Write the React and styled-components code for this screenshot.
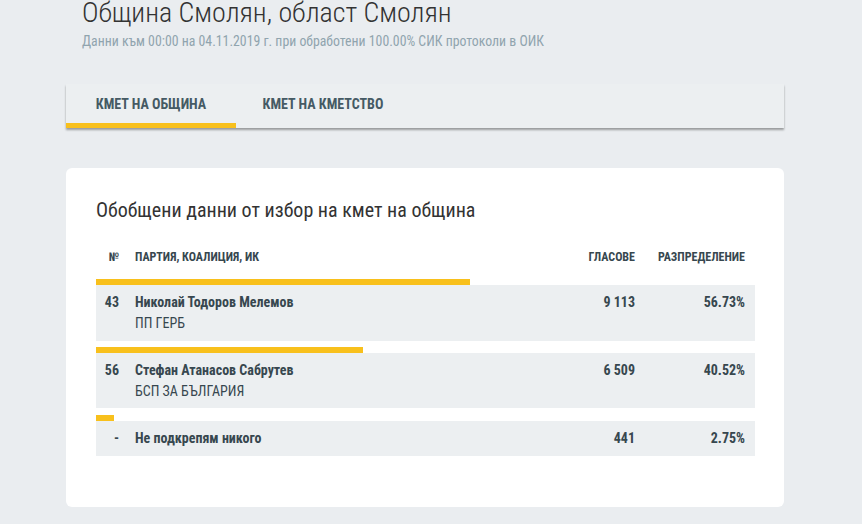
import React from "react";
import styled, { createGlobalStyle } from "styled-components";

const GlobalStyle = createGlobalStyle`
  body {
    margin: 0;
    background: #eaedf0;
    font-family: "Roboto Condensed", "Liberation Sans Narrow", Roboto, sans-serif;
    color: #37474f;
  }
`;

const Page = styled.div`
  width: 718px;
  padding-left: 66px;
`;

const Header = styled.header`
  padding-left: 16px;
`;

const Title = styled.h1`
  margin: 0;
  font-size: 28px;
  line-height: 26px;
  font-weight: 300;
  color: #333;
`;

const Subtitle = styled.div`
  font-size: 13.8px;
  line-height: 20px;
  color: #90a4ae;
  margin-top: 5px;
`;

const Tabs = styled.nav`
  display: flex;
  height: 44px;
  margin-top: 33px;
  background: #eceff1;
  box-shadow: 0 2px 2px rgba(0, 0, 0, 0.35);
`;

const Tab = styled.div`
  width: 170px;
  display: flex;
  align-items: center;
  justify-content: center;
  font-size: 14px;
  font-weight: 700;
  text-transform: uppercase;
  color: #455a64;
  box-sizing: border-box;
  border-bottom: 5px solid ${(p) => (p.active ? "#f8c01c" : "transparent")};
  padding-left: ${(p) => (p.active ? 0 : 4)}px;
`;

const Card = styled.section`
  margin-top: 40px;
  height: 339px;
  box-sizing: border-box;
  background: #fff;
  border-radius: 6px;
  padding: 30px 29px 0 30px;
`;

const CardTitle = styled.h2`
  margin: 0;
  font-size: 20px;
  line-height: 24px;
  font-weight: 400;
  color: #333;
`;

const HeadRow = styled.div`
  display: grid;
  grid-template-columns: 39px 1fr 100px 110px;
  align-items: center;
  height: 32px;
  margin-top: 19px;
  padding-right: 10px;
  font-size: 12px;
  font-weight: 700;
  text-transform: uppercase;
  color: #37474f;
`;

const Entry = styled.div`
  margin-top: ${(p) => p.gap}px;
`;

const Bar = styled.div`
  height: 6px;
  background: #f8c01c;
`;

const Row = styled.div`
  display: grid;
  grid-template-columns: 39px 1fr 100px 110px;
  align-items: start;
  min-height: ${(p) => p.h}px;
  box-sizing: border-box;
  padding: 8px 10px 0 0;
  background: #eceff1;
  font-size: 14px;
  line-height: 19px;
`;

const Num = styled.div`
  text-align: right;
  padding-right: 16px;
  font-weight: 700;
`;

const Right = styled.div`
  text-align: right;
  font-weight: 700;
`;

const Name = styled.div`
  font-weight: 700;
`;

const Party = styled.div`
  margin-top: 2px;
  font-weight: 400;
`;

const results = [
  { n: "43", name: "Николай Тодоров Мелемов", party: "ПП ГЕРБ", votes: "9 113", pct: 56.73, h: 56, gap: 6 },
  { n: "56", name: "Стефан Атанасов Сабрутев", party: "БСП ЗА БЪЛГАРИЯ", votes: "6 509", pct: 40.52, h: 55, gap: 6 },
  { n: "-", name: "Не подкрепям никого", votes: "441", pct: 2.75, h: 35, gap: 7 },
];

export default function App() {
  return (
    <>
      <GlobalStyle />
      <Page>
        <Header>
          <Title>Община Смолян, област Смолян</Title>
          <Subtitle>Данни към 00:00 на 04.11.2019 г. при обработени 100.00% СИК протоколи в ОИК</Subtitle>
        </Header>
        <Tabs>
          <Tab active>Кмет на община</Tab>
          <Tab>Кмет на кметство</Tab>
        </Tabs>
        <Card>
          <CardTitle>Обобщени данни от избор на кмет на община</CardTitle>
          <HeadRow>
            <Num>№</Num>
            <div>Партия, коалиция, ИК</div>
            <Right>Гласове</Right>
            <Right>Разпределение</Right>
          </HeadRow>
          {results.map((r) => (
            <Entry key={r.n} gap={r.gap}>
              <Bar style={{ width: `${r.pct}%` }} />
              <Row h={r.h}>
                <Num>{r.n}</Num>
                <div>
                  <Name>{r.name}</Name>
                  {r.party && <Party>{r.party}</Party>}
                </div>
                <Right>{r.votes}</Right>
                <Right>{r.pct.toFixed(2)}%</Right>
              </Row>
            </Entry>
          ))}
        </Card>
      </Page>
    </>
  );
}
